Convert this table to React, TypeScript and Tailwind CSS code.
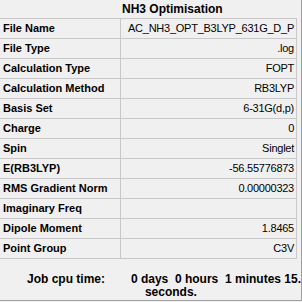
import React from "react";

const rows: [string, string][] = [
  ["File Name", "AC_NH3_OPT_B3LYP_631G_D_P"],
  ["File Type", ".log"],
  ["Calculation Type", "FOPT"],
  ["Calculation Method", "RB3LYP"],
  ["Basis Set", "6-31G(d,p)"],
  ["Charge", "0"],
  ["Spin", "Singlet"],
  ["E(RB3LYP)", "-56.55776873"],
  ["RMS Gradient Norm", "0.00000323"],
  ["Imaginary Freq", ""],
  ["Dipole Moment", "1.8465"],
  ["Point Group", "C3V"],
];

export default function App() {
  return (
    <div className="w-[302px] h-[302px] bg-[#f0f0f0] text-black font-['Liberation_Sans',Arial,sans-serif]">
      <div className="h-[301px] w-[302px] border-r border-b border-[#a0a0a0] overflow-hidden">
        {/* Title */}
        <div className="h-[18px] pl-[122px] flex items-center text-[12px] font-bold leading-none">
          NH3 Optimisation
        </div>

        {/* Summary table */}
        <div className="w-[297px] border-t border-[#c8c8c8]">
          {rows.map(([label, value]) => (
            <div key={label} className="flex h-[20px] border-b border-[#c8c8c8]">
              <div className="w-[121px] border-r border-[#c8c8c8] pl-[3px] flex items-center text-[11px] font-bold whitespace-nowrap">
                {label}
              </div>
              <div className="w-[176px] border-r border-[#c8c8c8] pr-[2px] flex items-center justify-end text-[11px] tracking-[-0.25px] whitespace-nowrap overflow-hidden">
                {value}
              </div>
            </div>
          ))}
        </div>

        {/* Job time */}
        <div className="flex pt-[14px] text-[12px] font-bold leading-[13px] whitespace-nowrap">
          <div className="w-[131px] pl-[27px]">Job cpu time:</div>
          <div className="flex flex-col">
            <span>0 days&nbsp;&nbsp;0 hours&nbsp;&nbsp;1 minutes 15.</span>
            <span className="pl-[14px]">seconds.</span>
          </div>
        </div>
      </div>
    </div>
  );
}
